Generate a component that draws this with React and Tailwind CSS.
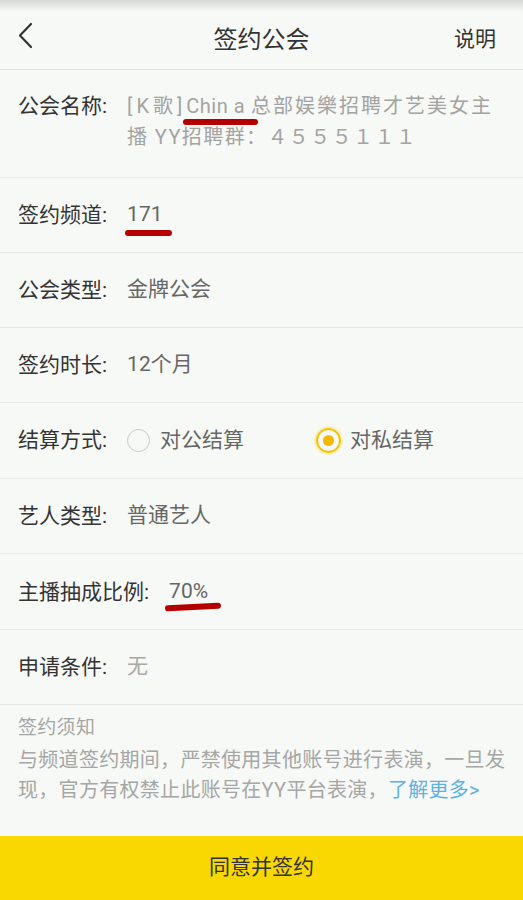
import React from "react";

const font = { fontFamily: 'Roboto, "Noto Sans CJK SC", sans-serif' };

function Row({ label, children, className = "" }) {
  return (
    <div className={"relative flex items-center h-[75px] border-b border-[#e7e9e6] px-[18px] " + className}>
      <span className="text-[21px] text-[#333333] leading-[30px] shrink-0">{label}</span>
      <div className="ml-[20px] flex items-center">{children}</div>
    </div>
  );
}

function Mark({ className }) {
  return <div className={"absolute h-[6px] rounded-full bg-[#b40000] " + className} />;
}

export default function App() {
  return (
    <div className="w-[523px] h-[900px] bg-[#f7f9f6] flex flex-col overflow-hidden" style={font}>
      <div className="h-[11px] bg-gradient-to-b from-[#d6d8d5] to-[#f4f6f3]" />
      <div className="relative h-[59px] flex items-center justify-center border-b border-[#e2e4e1]">
        <svg className="absolute left-[16px] top-[11px]" width="20" height="28" viewBox="0 0 20 28">
          <polyline points="15,2 4,13.5 15,25" fill="none" stroke="#333" strokeWidth="2.2" strokeLinecap="round" strokeLinejoin="round" />
        </svg>
        <span className="text-[24px] text-[#333333]">签约公会</span>
        <span className="absolute right-[27px] text-[21px] text-[#333333]">说明</span>
      </div>

      <div className="relative flex border-b border-[#e7e9e6] px-[18px] pt-[21px] pb-[24px]">
        <span className="text-[21px] text-[#333333] leading-[31px] shrink-0">公会名称:</span>
        <div className="ml-[20px] text-[20px] text-[#a3a3a3] leading-[31px] whitespace-nowrap tracking-[1.4px]">
          <div>
            <span className="tracking-[4px]">[K歌]</span>
            <span className="tracking-[0.5px] mr-[6px]">Chin a</span>
            <span className="tracking-[2px]">总部娱樂招聘才艺美女主</span>
          </div>
          <div>播 YY招聘群：４５５５１１１</div>
        </div>
        <Mark className="left-[183px] top-[49px] w-[75px]" />
      </div>

      <Row label="签约频道:">
        <span className="text-[21px] text-[#666666]">171</span>
        <Mark className="left-[125px] top-[52px] w-[47px]" />
      </Row>
      <Row label="公会类型:">
        <span className="text-[21px] text-[#666666]">金牌公会</span>
      </Row>
      <Row label="签约时长:">
        <span className="text-[21px] text-[#666666]">12个月</span>
      </Row>
      <div className="flex items-center h-[76px] border-b border-[#e7e9e6] px-[18px]">
        <span className="text-[21px] text-[#333333] shrink-0">结算方式:</span>
        <div className="ml-[20px] flex items-center">
          <div className="w-[189px] flex items-center">
            <span className="w-[23px] h-[23px] rounded-full border-[1.5px] border-[#c9c9c9]" />
            <span className="ml-[10px] text-[21px] text-[#666666]">对公结算</span>
          </div>
          <div className="flex items-center">
            <span className="w-[25px] h-[25px] rounded-full border-[2px] border-[#f3c400] ring-[2px] ring-[#f9f0c0] flex items-center justify-center">
              <span className="w-[11px] h-[11px] rounded-full bg-[#f2b900]" />
            </span>
            <span className="ml-[9px] text-[21px] text-[#666666]">对私结算</span>
          </div>
        </div>
      </div>
      <Row label="艺人类型:">
        <span className="text-[21px] text-[#666666]">普通艺人</span>
      </Row>
      <Row label="主播抽成比例:" className="h-[76px]">
        <span className="text-[21px] text-[#666666]">70%</span>
        <Mark className="left-[165px] top-[50px] w-[56px] -rotate-3" />
      </Row>
      <Row label="申请条件:" className="h-[67px]">
        <span className="text-[21px] text-[#a8a8a8]">无</span>
      </Row>

      <div className="flex-1 pl-[18px] pr-[6px] pt-[8px] text-[20px] leading-[30px] text-[#a6a6a6] tracking-[0.3px]">
        <div className="text-[19px]">签约须知</div>
        <div className="mt-[2px]">
          与频道签约期间，严禁使用其他账号进行表演，一旦发现，官方有权禁止此账号在YY平台表演，<span className="text-[#5ab2e6]">了解更多&gt;</span>
        </div>
      </div>

      <div className="h-[64px] bg-[#f8d800] flex items-center justify-center">
        <span className="text-[21px] text-[#333333]">同意并签约</span>
      </div>
    </div>
  );
}
